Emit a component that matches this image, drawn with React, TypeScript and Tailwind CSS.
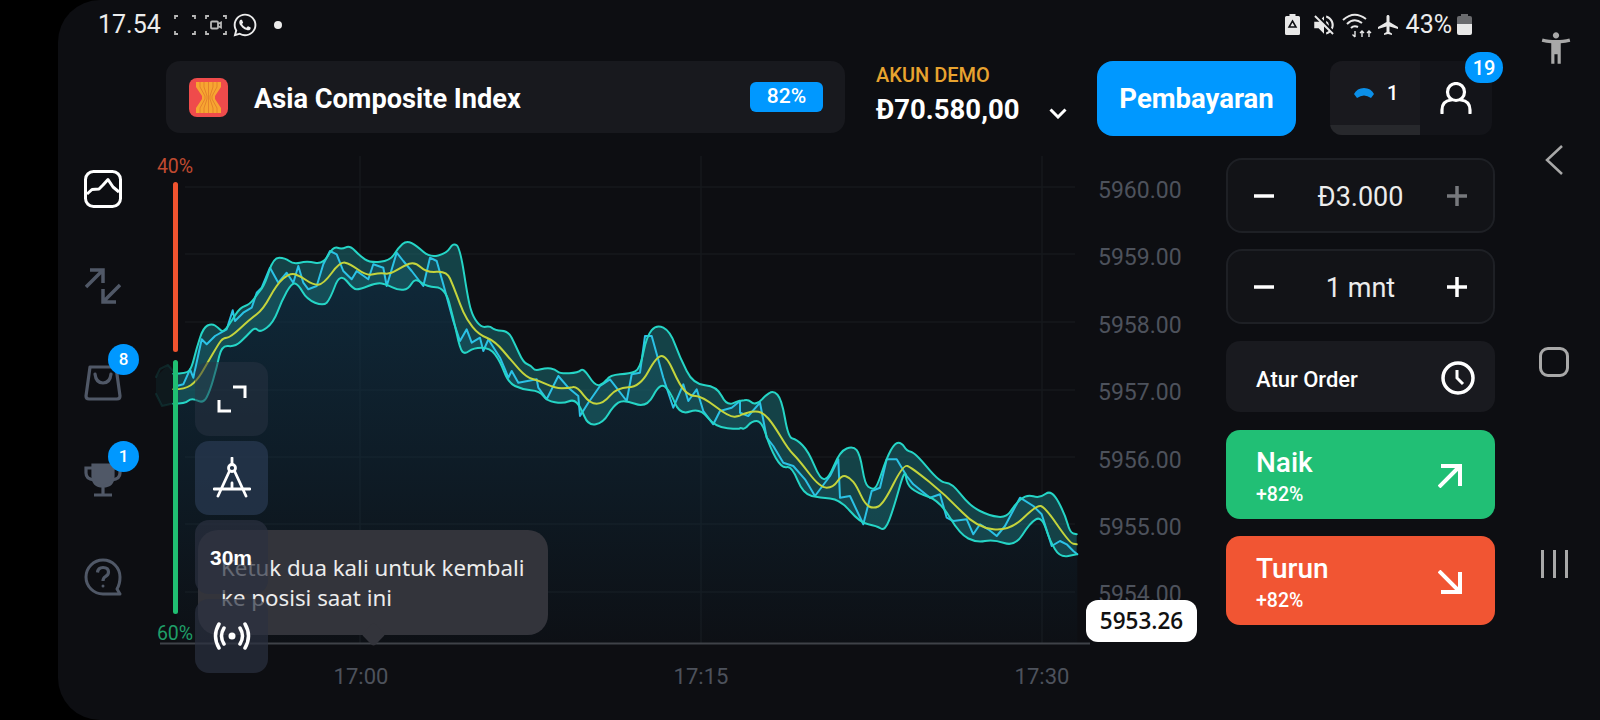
import { FaWhatsapp } from 'react-icons/fa'
import { MdAccessibilityNew, MdAirplanemodeActive, MdVolumeOff } from 'react-icons/md'

type Pts = number[]
type Pt = [number, number]

// points were read off the chart in three crops, origin + value / 3
const crop = (ox: number, oy: number, pts: Pts) => {
  const out: Pt[] = []
  for (let i = 0; i < pts.length; i += 2) out.push([ox + pts[i] / 3, oy + pts[i + 1] / 3])
  return out
}

const upper = [
  ...crop(160, 220, [40,458,80,458,95,440,110,380,130,320,155,307,175,320,190,335,215,300,240,260,270,250,295,215,315,190,340,110,375,110,400,130,440,120,490,130,520,75,545,85,570,73,600,105,630,125,690,120,715,80,740,58,770,75,810,110,860,97,880,65,900,80]),
  ...crop(440, 300, [85,0,100,50,125,80,150,75,165,88,205,90,225,130,250,185,275,195,285,210,320,200,345,205,360,218,415,215,430,200,465,255,490,250,510,222,570,218,600,205,620,105,650,70,690,90,720,170,760,250,830,255,860,315,900,298]),
  ...crop(740, 380, [0,60,25,55,40,70,60,62,75,45,100,28,125,55,145,170,170,175,205,210,240,295,265,295,300,210,340,195,360,220,375,310,395,325,410,320,440,230,465,185,485,185,500,210,525,215,600,305,635,305,690,375,750,405,800,410,825,370,860,340,900,352,935,325,975,400,990,455,1010,460]),
]

const lower = [
  ...crop(160, 220, [40,548,75,548,95,530,130,548,150,510,170,440,185,372,225,378,260,345,285,318,300,335,340,305,365,240,395,185,415,190,440,235,490,255,510,235,540,155,580,205,600,205,650,185,680,190,715,208,745,205,765,170,800,197,855,200,880,290,900,385]),
  ...crop(440, 300, [75,160,100,140,150,140,180,180,205,245,245,265,300,270,320,300,370,308,400,295,420,315,445,375,490,365,520,315,550,295,620,322,660,245,690,270,720,343,780,320,825,378,900,385]),
  ...crop(740, 380, [0,140,15,145,35,120,65,120,90,200,125,262,155,255,190,340,240,350,300,355,360,425,410,435,435,450,460,385,495,260,500,310,530,335,600,360,660,460,710,485,760,475,825,497,870,425,905,405,930,480,960,530,1010,520]),
]

const mid = [
  ...crop(160, 220, [40,505,75,505,110,480,140,430,175,370,190,350,210,350,270,295,310,265,350,190,390,155,420,165,460,192,490,190,540,122,570,128,620,165,660,155,690,160,730,135,765,122,800,155,860,150,880,195,900,250]),
  ...crop(440, 300, [80,55,115,100,165,120,215,180,260,230,300,240,345,262,385,262,410,255,450,308,490,308,530,260,600,258,650,165,680,165,720,255,750,285,785,285,870,350,900,345]),
  ...crop(740, 380, [0,102,40,90,70,95,100,130,145,205,175,235,240,320,280,320,305,282,330,290,350,315,375,370,400,383,430,370,490,250,515,260,620,345,710,440,810,450,890,372,915,378,990,487,1010,490]),
]

const price = [
  ...crop(160, 220, [50,495,70,490,90,445,100,470,125,355,140,370,165,345,200,325,218,268,225,300,250,275,275,260,290,215,305,200,330,140,355,185,380,155,400,185,415,135,430,185,445,205,470,195,490,130,510,90,530,100,550,150,575,175,590,150,625,175,640,130,670,140,680,195,710,95,730,120,755,150,790,195,810,110,830,120,850,190,880,300,900,360]),
  ...crop(440, 300, [60,120,80,85,95,125,120,110,130,150,145,115,180,170,195,205,205,230,215,210,235,245,290,235,295,260,320,295,355,225,385,260,415,285,420,345,445,305,480,255,510,235,560,300,575,220,600,215,615,105,635,105,670,230,700,320,730,250,745,300,770,265,790,330,820,370,840,330,875,320,900,300]),
  ...crop(740, 380, [0,95,25,105,60,65,80,170,100,195,130,245,160,255,195,295,225,345,270,285,295,235,300,350,330,345,370,430,395,330,420,320,440,235,470,235,500,285,520,310,570,350,600,340,620,410,640,420,680,415,700,460,720,430,745,445,770,465,795,435,840,350,880,375,905,400,935,495,960,480,980,490,1000,510,1012,520]),
]

const line = (pts: Pt[]) => pts.map(([x, y], i) => `${i ? 'L' : 'M'}${x.toFixed(1)} ${y.toFixed(1)}`).join(' ')

// quadratic through the midpoints, rounds off the corners of the traced bands
const smooth = (pts: Pt[]) => {
  let d = `M${pts[0][0].toFixed(1)} ${pts[0][1].toFixed(1)}`
  for (let i = 1; i < pts.length - 1; i++) {
    const mx = (pts[i][0] + pts[i + 1][0]) / 2
    const my = (pts[i][1] + pts[i + 1][1]) / 2
    d += ` Q${pts[i][0].toFixed(1)} ${pts[i][1].toFixed(1)} ${mx.toFixed(1)} ${my.toFixed(1)}`
  }
  const last = pts[pts.length - 1]
  return d + ` L${last[0].toFixed(1)} ${last[1].toFixed(1)}`
}

const bandPath = smooth(upper) + ' ' + smooth([...lower].reverse()).replace('M', 'L') + ' Z'
const areaPath = line(price) + ` L${price[price.length - 1][0]} 642 L${price[0][0]} 642 Z`

const priceLabels = ['5960.00', '5959.00', '5958.00', '5957.00', '5956.00', '5955.00', '5954.00']
const gridY = [186, 253, 321, 389, 456, 523, 591]
const gridX = [360, 701, 1042]
const timeLabels = [
  { t: '17:00', x: 361 },
  { t: '17:15', x: 701 },
  { t: '17:30', x: 1042 },
]

function ChartCanvas() {
  return (
    <svg className="absolute inset-0" width="1078" height="585" viewBox="148 135 1078 585" fill="none">
      <defs>
        <linearGradient id="area" gradientUnits="userSpaceOnUse" x1="0" y1="240" x2="0" y2="645">
          <stop offset="0" stopColor="#10344a" stopOpacity="0.75" />
          <stop offset="1" stopColor="#10344a" stopOpacity="0.05" />
        </linearGradient>
      </defs>
      {gridY.map((y) => (
        <line key={y} x1="185" x2="1075" y1={y} y2={y} stroke="#16181d" strokeWidth="1.5" />
      ))}
      {gridX.map((x) => (
        <line key={x} x1={x} x2={x} y1="155" y2="642" stroke="#16181d" strokeWidth="1.5" />
      ))}
      <path d={areaPath} fill="url(#area)" />
      <path d={bandPath} fill="#1c6d72" fillOpacity="0.55" />
      <g strokeLinejoin="round" strokeLinecap="round" strokeWidth="2">
        <path d="M156 376 L160 368 L168 364 L175 372 M156 393 L162 405 L175 402" stroke="#24d6c8" strokeOpacity="0.12" />
        <path d="M156 376 L156 393 L162 405 L175 402 L175 372 L168 364 Z" fill="#1c6d72" fillOpacity="0.12" stroke="none" />
        <path d={line(price)} stroke="#2bc2e6" />
        <path d={smooth(upper)} stroke="#25d5c6" />
        <path d={smooth(lower)} stroke="#25d5c6" />
        <path d={smooth(mid)} stroke="#c4d43c" />
      </g>
      <line x1="160" x2="1090" y1="642.5" y2="642.5" stroke="#3f4248" strokeWidth="2" />
    </svg>
  )
}

function Stepper({ value, plusDim }: { value: string; plusDim?: boolean }) {
  return (
    <div className="h-[75px] flex items-center justify-between px-[26px] rounded-[16px] border-2 border-[#1e2025] bg-[#121317]">
      <svg width="20" height="20" viewBox="0 0 20 20" className="text-white">
        <path d="M0 10H20" stroke="currentColor" strokeWidth="3.5" />
      </svg>
      <span className="mt-[3px] text-[27px] text-[#ececec]">{value}</span>
      <svg width="20" height="20" viewBox="0 0 20 20" className={plusDim ? 'text-[#77797d]' : 'text-white'}>
        <path d="M0 10H20M10 0V20" stroke="currentColor" strokeWidth="3.5" />
      </svg>
    </div>
  )
}

function SideItem({ children, badge }: { children: React.ReactNode; badge?: string }) {
  return (
    <div className="relative h-[97px] flex items-center justify-center">
      {children}
      {badge && (
        <span className="absolute left-[50px] top-[10px] w-[31px] h-[31px] rounded-full bg-[#0098ff] flex items-center justify-center text-white text-[17px] font-medium">
          {badge}
        </span>
      )}
    </div>
  )
}

function TradeButton({ label, bg, arrow }: { label: string; bg: string; arrow: string }) {
  return (
    <div className={`h-[89px] rounded-[14px] ${bg} pl-[30px] pr-[33px] pt-[5px] flex items-center justify-between text-white`}>
      <div className="flex flex-col">
        <span className="text-[28px] leading-[32px] font-medium">{label}</span>
        <span className="text-[19.500px] leading-[24px] font-medium mt-[4px]">+82%</span>
      </div>
      <svg width="24" height="24" viewBox="0 0 24 24" fill="none" stroke="white" strokeWidth="4" className="-mt-[3px]">
        <path d={arrow} />
      </svg>
    </div>
  )
}

export default function App() {
  return (
    <div className="w-[1600px] h-[720px] bg-black pl-[58px] overflow-hidden [font-family:Roboto,sans-serif]">
      <div className="w-full h-full bg-[#0d0e12] rounded-l-[42px] flex">
        <div className="w-[1450px] flex flex-col">
          {/* status bar */}
          <div className="h-[61px] pb-[12px] pl-[40px] pr-[36px] flex items-center justify-between text-[#ececec]">
            <div className="flex items-center">
              <span className="text-[25px] w-[76px]">17.54</span>
              <svg width="22" height="20" viewBox="0 0 22 20" fill="none" stroke="#b8b8b8" strokeWidth="1.8">
                <path d="M1 4V1H4M18 1H21V4M1 16V19H4M18 19H21V16" />
              </svg>
              <svg width="22" height="20" viewBox="0 0 22 20" fill="none" stroke="#b8b8b8" strokeWidth="1.8" className="ml-[9px]">
                <path d="M1 4V1H4M18 1H21V4M1 16V19H4M18 19H21V16" />
                <rect x="6" y="6.500" width="7" height="7" rx="1" />
                <path d="M13 9L16 7.500V12.500L13 11" />
              </svg>
              <FaWhatsapp className="ml-[5px] text-[26px] text-[#ececec]" />
              <span className="ml-[16px] w-[8px] h-[8px] rounded-full bg-[#ececec]" />
            </div>
            <div className="flex items-center">
              <svg width="15" height="21" viewBox="0 0 15 21">
                <path d="M4.500 0H10.500V2H13.500Q15 2 15 3.500V19.500Q15 21 13.500 21H1.500Q0 21 0 19.500V3.500Q0 2 1.500 2H4.500Z" fill="#e8e8e8" />
                <path d="M7.500 7L11 13H4Z" fill="none" stroke="#0d0e12" strokeWidth="1.5" />
              </svg>
              <MdVolumeOff className="ml-[11px] text-[26px] text-[#e8e8e8]" />
              <svg width="31" height="26" viewBox="0 0 31 26" fill="none" stroke="#e8e8e8" strokeWidth="2" className="ml-[5px]">
                <path d="M1 8Q12 -2 24 7M5 12Q12 5 20 11M9 16Q12 13 16 15" />
                <path d="M13 19V25M10.500 22.500L13 25M20 25V19M18 21L20 19L22 21M27 25V19M25 21L27 19L29 21" strokeWidth="1.4" />
              </svg>
              <MdAirplanemodeActive className="ml-[3px] text-[24px] text-[#e8e8e8]" />
              <span className="ml-[6px] text-[25px]">43%</span>
              <div className="ml-[5px] w-[15px] h-[21px] flex flex-col items-center">
                <span className="w-[7px] h-[2px] bg-[#6a6b6e]" />
                <span className="w-full h-[8px] bg-[#6a6b6e] rounded-t-[2px]" />
                <span className="w-full h-[11px] bg-[#e8e8e8] rounded-b-[2px]" />
              </div>
            </div>
          </div>

          {/* header */}
          <div className="pl-[108px] flex items-start">
            <div className="w-[679px] h-[72px] rounded-[14px] bg-[#18191e] pl-[23px] pr-[22px] flex items-center">
              <svg width="39" height="39" viewBox="0 0 39 39">
                <rect width="39" height="39" rx="8" fill="#ef4b4b" />
                <path d="M7 4H32V9L26 18V21L32 30V35H7V30L13 21V18L7 9Z" fill="#f7a531" />
                <path d="M11 4V9L16 18V21L11 30V35M15 4V9L18 18V21L15 30V35M19.500 4V35M24 4V9L21 18V21L24 30V35M28 4V9L23 18V21L28 30V35" stroke="#e5832b" strokeWidth="1" fill="none" />
              </svg>
              <span className="ml-[26px] mt-[4px] text-[27.200px] font-bold text-white flex-1">Asia Composite Index</span>
              <span className="w-[73px] h-[30px] rounded-[6px] bg-[#0098ff] text-white text-[21px] font-medium flex items-center justify-center">82%</span>
            </div>
            <div className="w-[252px] h-[72px] pl-[31px] pt-[3px] flex flex-col">
              <span className="text-[20px] leading-[22px] font-medium text-[#e8a32f]">AKUN DEMO</span>
              <div className="flex items-center mt-[8px]">
                <span className="text-[27.500px] leading-[32px] font-bold text-white">Đ70.580,00</span>
                <svg width="18" height="11" viewBox="0 0 18 11" fill="none" stroke="white" strokeWidth="3" className="ml-[30px] mt-[6px]">
                  <path d="M1.500 1.500L9 9L16.500 1.500" />
                </svg>
              </div>
            </div>
            <div className="w-[199px] h-[75px] rounded-[16px] bg-[#0098ff] text-white text-[27.500px] font-bold flex items-center justify-center">Pembayaran</div>
            <div className="ml-[34px] w-[162px] h-[74px] flex">
              <div className="w-[90px] h-full rounded-l-[12px] bg-[#19191e] flex flex-col overflow-hidden">
                <div className="flex-1 flex items-center pl-[24px]">
                  <svg width="20" height="10" viewBox="0 0 20 10">
                    <path d="M0 6Q3 0 10 0Q17 0 20 6L17 10Q10 5 3 10Z" fill="#0b8fe8" />
                  </svg>
                  <span className="ml-[13px] text-white text-[20px] font-medium">1</span>
                </div>
                <div className="h-[10px] bg-[#27282c]" />
              </div>
              <div className="flex-1 rounded-r-[12px] bg-[#131419] relative flex items-center justify-center">
                <svg width="32" height="32" viewBox="0 0 32 32" fill="none" stroke="white" strokeWidth="3.200">
                  <circle cx="16" cy="10" r="8.500" />
                  <path d="M2 31V28Q2 19 11 18M30 31V28Q30 19 21 18" strokeLinecap="round" />
                </svg>
                <span className="absolute left-[45px] -top-[9px] w-[38px] h-[31px] rounded-full bg-[#0098ff] text-white text-[20px] font-medium flex items-center justify-center">19</span>
              </div>
            </div>
          </div>

          {/* body */}
          <div className="flex-1 flex">
            {/* left nav */}
            <div className="w-[90px] pt-[4px] flex flex-col">
              <SideItem>
                <svg width="38" height="38" viewBox="0 0 38 38" fill="none" stroke="white" strokeWidth="3" strokeLinejoin="round">
                  <rect x="1.500" y="1.500" width="35" height="35" rx="8" />
                  <path d="M3 24L8 19.500L15 19L19 15L24 9.500L29 17L35 22" />
                </svg>
              </SideItem>
              <SideItem>
                <svg width="36" height="36" viewBox="0 0 36 36" fill="none" stroke="#505867" strokeWidth="3.500">
                  <path d="M1 19L18 2M5 2H18V15M35 17L18 34M31 34H18V21" />
                </svg>
              </SideItem>
              <SideItem badge="8">
                <svg width="38" height="36" viewBox="0 0 38 36" fill="none" stroke="#505867" strokeWidth="3.200" strokeLinejoin="round">
                  <path d="M6 2H32L36 31Q36 34 33 34H5Q2 34 2 31Z" />
                  <path d="M11 9Q12 18 19 18Q26 18 27 9" strokeLinecap="round" />
                </svg>
              </SideItem>
              <SideItem badge="1">
                <svg width="38" height="34" viewBox="0 0 38 34" fill="none" stroke="#505867" strokeWidth="3.200">
                  <path d="M9 2H29V13Q29 23 19 23Q9 23 9 13Z" fill="#505867" />
                  <path d="M9 5H2V10Q2 16 10 17M29 5H36V10Q36 16 28 17M19 23V31M10 32H28" />
                </svg>
              </SideItem>
              <SideItem>
                <svg width="38" height="38" viewBox="0 0 38 38" fill="none" stroke="#505867" strokeWidth="3">
                  <path d="M36 19A17 17 0 1 0 19 36H36L33 31Q36 26 36 19Z" strokeLinejoin="round" />
                  <path d="M13.500 14.500Q14 9.500 19 9.500Q24.500 9.500 24.500 14Q24.500 17 21.500 18.500Q19 20 19 23" strokeWidth="3.200" />
                  <circle cx="19" cy="28" r="1.500" fill="#505867" stroke="none" />
                </svg>
              </SideItem>
            </div>

            {/* chart */}
            <div className="relative w-[1078px]">
              <ChartCanvas />

              {priceLabels.map((p, i) => (
                <span
                  key={p}
                  className="absolute left-[950px] -translate-y-1/2 text-[23px] leading-none text-[#4d525c]"
                  style={{ top: 54 + i * 67.4 }}
                >
                  {p}
                </span>
              ))}
              {timeLabels.map((l) => (
                <span
                  key={l.t}
                  className="absolute top-[530px] -translate-x-1/2 text-[22px] leading-[22px] text-[#4d525c]"
                  style={{ left: l.x - 148 }}
                >
                  {l.t}
                </span>
              ))}

              {/* sentiment bar */}
              <div className="absolute left-[5px] top-[20px] w-[44px] flex flex-col items-center">
                <span className="text-[19.500px] leading-[22px] text-[#c04a30]">40%</span>
                <span className="mt-[4px] w-[5px] h-[170px] rounded-full bg-[#f0532f]" />
                <span className="mt-[8px] w-[5px] h-[254px] rounded-full bg-[#20bf72]" />
                <span className="mt-[9px] text-[19.500px] leading-[22px] text-[#1f9e68]">60%</span>
              </div>

              {/* tooltip sits under the tool buttons */}
              <div className="absolute left-[50px] top-[394px] w-[350px] h-[105px] rounded-[20px] bg-[#33343b] pl-[23px] pt-[23px] text-[22.300px] leading-[30px] text-[#ececec] [font-family:'Noto_Sans',sans-serif]">
                Ketuk dua kali untuk kembali
                <br />
                ke posisi saat ini
                <span className="absolute left-[167px] -bottom-[8px] w-[17px] h-[17px] rotate-45 bg-[#33343b] rounded-[3px]" />
              </div>

              <div className="absolute left-[47px] top-[226px] w-[73px] flex flex-col gap-[5px]">
                <div className="h-[74px] rounded-[14px] bg-[#2a3444]/50 flex items-center justify-center">
                  <svg width="30" height="30" viewBox="0 0 30 30" fill="none" stroke="white" strokeWidth="3">
                    <path d="M16 3H28V14M2 16V27H14" />
                  </svg>
                </div>
                <div className="h-[74px] rounded-[14px] bg-[#2a3a52]/70 flex items-center justify-center">
                  <svg width="38" height="42" viewBox="0 0 38 42" fill="none" stroke="white" strokeWidth="2.800" strokeLinecap="round">
                    <circle cx="19" cy="11" r="3.500" />
                    <path d="M19 1V7M16.500 14L5 39M21.500 14L33 39M1 32H37M19 26V31" />
                  </svg>
                </div>
                <div className="h-[74px] rounded-[14px] bg-[#2b3140]/70 flex items-center pl-[15px]">
                  <span className="mt-[2px] text-[21px] font-bold text-white [font-family:'Liberation_Sans',sans-serif]">30m</span>
                </div>
                <div className="h-[74px] rounded-[14px] bg-[#2b3140]/70 flex items-center justify-center">
                  <svg width="38" height="28" viewBox="0 0 38 28" fill="none" stroke="white" strokeWidth="3.500" strokeLinecap="round">
                    <circle cx="19" cy="14" r="3.500" fill="white" stroke="none" />
                    <path d="M11 6Q6 14 11 22M27 6Q32 14 27 22M6 2Q-1 14 6 26M32 2Q39 14 32 26" />
                  </svg>
                </div>
              </div>

              {/* current price */}
              <div className="absolute left-[938px] top-[464px] w-[111px] h-[42px] rounded-[12px] bg-white flex items-center justify-center text-[22.500px] font-semibold text-[#111] [font-family:'Open_Sans',sans-serif]">
                5953.26
              </div>
            </div>

            {/* order panel */}
            <div className="w-[269px] pt-[22px] flex flex-col">
              <Stepper value="Đ3.000" plusDim />
              <div className="mt-[16px]">
                <Stepper value="1 mnt" />
              </div>
              <div className="mt-[17px] h-[71px] rounded-[14px] bg-[#191a1f] pl-[30px] pr-[20px] flex items-center justify-between text-white text-[22px] font-medium">
                <span className="mt-[5px]">Atur Order</span>
                <svg width="34" height="34" viewBox="0 0 34 34" fill="none" stroke="white" strokeWidth="3.500" className="mt-[2px]">
                  <circle cx="17" cy="17" r="15" />
                  <path d="M16 9V17L22 23" strokeWidth="3" />
                </svg>
              </div>
              <div className="mt-[18px]">
                <TradeButton label="Naik" bg="bg-[#21bf75]" arrow="M1 23L22 2M3 2H22V22" />
              </div>
              <div className="mt-[17px]">
                <TradeButton label="Turun" bg="bg-[#f15533]" arrow="M1 1L22 22M3 22H22V2" />
              </div>
            </div>
          </div>
        </div>

        {/* android nav */}
        <div className="flex-1 flex flex-col items-center text-[#a8a8a8]">
          <MdAccessibilityNew className="mt-[29px] ml-[3px] text-[38px]" />
          <svg width="20" height="32" viewBox="0 0 20 32" fill="none" stroke="currentColor" strokeWidth="2.500" className="mt-[77px]">
            <path d="M18 2L3 16L18 30" />
          </svg>
          <div className="mt-[171px] w-[30px] h-[30px] rounded-[9px] border-[3px] border-[#a8a8a8]" />
          <div className="mt-[173px] flex gap-[9px]">
            <span className="w-[3px] h-[28px] bg-[#a8a8a8]" />
            <span className="w-[3px] h-[28px] bg-[#a8a8a8]" />
            <span className="w-[3px] h-[28px] bg-[#a8a8a8]" />
          </div>
        </div>
      </div>
    </div>
  )
}
